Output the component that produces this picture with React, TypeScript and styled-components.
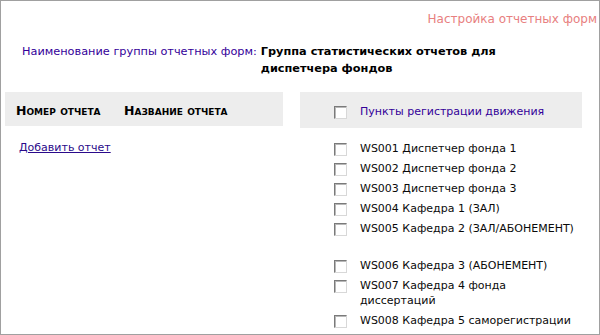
import React from "react";
import styled, { createGlobalStyle } from "styled-components";

const GlobalStyle = createGlobalStyle`
  html, body {
    margin: 0;
    padding: 0;
    background: #ffffff;
  }
  body {
    font-family: "DejaVu Sans", Verdana, sans-serif;
    font-size: 11px;
    color: #111;
  }
`;

const Frame = styled.div`
  box-sizing: border-box;
  width: 600px;
  height: 335px;
  border: 1px solid #a0a0a0;
  overflow: hidden;
`;

const PageTitle = styled.div`
  text-align: right;
  color: #e88080;
  font-size: 12px;
  padding: 11px 2px 0 0;
  line-height: 15px;
`;

const GroupRow = styled.div`
  display: flex;
  gap: 4px;
  padding: 16px 0 0 21px;
  line-height: 17px;
  font-size: 11.3px;
`;

const GroupLabel = styled.span`
  color: #330099;
  white-space: nowrap;
`;

const GroupValue = styled.span`
  font-weight: bold;
  color: #000;
  width: 250px;
`;

const Columns = styled.div`
  display: flex;
  padding: 15px 0 0 4px;
  gap: 17px;
`;

const Panel = styled.div<{ $width: number }>`
  width: ${(p) => p.$width}px;
`;

const HeadBar = styled.div<{ $height: number; $indent: number }>`
  display: flex;
  align-items: center;
  background: #ededed;
  height: ${(p) => p.$height}px;
  padding-left: ${(p) => p.$indent}px;
`;

const HeadCell = styled.div<{ $width?: number }>`
  width: ${(p) => (p.$width ? `${p.$width}px` : "auto")};
  font-weight: bold;
  font-variant: small-caps;
  font-size: 12.5px;
  color: #000;
  padding-top: 2px;
`;

const AddLink = styled.a`
  display: inline-block;
  margin: 14px 0 0 14px;
  color: #2a0a8a;
  text-decoration: underline;
  line-height: 15px;
`;

const Box = styled.span`
  box-sizing: border-box;
  flex: none;
  width: 13px;
  height: 13px;
  background: #fff;
  border-top: 1px solid #7a7a7a;
  border-left: 1px solid #7a7a7a;
  border-right: 1px solid #d8d8d8;
  border-bottom: 1px solid #d8d8d8;
  box-shadow: inset 1px 1px 0 #b8b8b8;
  margin-top: 2px;
`;

const CheckRow = styled.div<{ $gapBefore?: number }>`
  display: flex;
  align-items: flex-start;
  gap: 13px;
  padding: 2px 0 3px 34px;
  margin-top: ${(p) => p.$gapBefore ?? 0}px;
  line-height: 15px;
`;

const HeadCheck = styled.div`
  display: flex;
  align-items: flex-start;
  gap: 13px;
  line-height: 15px;
  padding-top: 2px;
`;

const HeadLabel = styled.span`
  color: #330099;
`;

const ItemLabel = styled.span`
  color: #0a0a0a;
`;

const List = styled.div`
  padding-top: 11px;
`;

const items: { text: React.ReactNode; gap?: number }[] = [
  { text: "WS001 Диспетчер фонда 1" },
  { text: "WS002 Диспетчер фонда 2" },
  { text: "WS003 Диспетчер фонда 3" },
  { text: "WS004 Кафедра 1 (ЗАЛ)" },
  { text: "WS005 Кафедра 2 (ЗАЛ/АБОНЕМЕНТ)" },
  { text: "WS006 Кафедра 3 (АБОНЕМЕНТ)", gap: 17 },
  {
    text: (
      <>
        WS007 Кафедра 4 фонда
        <br />
        диссертаций
      </>
    ),
  },
  { text: "WS008 Кафедра 5 саморегистрации" },
];

export default function App() {
  return (
    <>
      <GlobalStyle />
      <Frame>
        <PageTitle>Настройка отчетных форм</PageTitle>
        <GroupRow>
          <GroupLabel>Наименование группы отчетных форм:</GroupLabel>
          <GroupValue>Группа статистических отчетов для диспетчера фондов</GroupValue>
        </GroupRow>
        <Columns>
          <Panel $width={278}>
            <HeadBar $height={34} $indent={11}>
              <HeadCell $width={108}>Номер отчета</HeadCell>
              <HeadCell>Название отчета</HeadCell>
            </HeadBar>
            <AddLink href="#">Добавить отчет</AddLink>
          </Panel>
          <Panel $width={282}>
            <HeadBar $height={36} $indent={34}>
              <HeadCheck>
                <Box />
                <HeadLabel>Пункты регистрации движения</HeadLabel>
              </HeadCheck>
            </HeadBar>
            <List>
              {items.map((it, i) => (
                <CheckRow key={i} $gapBefore={it.gap}>
                  <Box />
                  <ItemLabel>{it.text}</ItemLabel>
                </CheckRow>
              ))}
            </List>
          </Panel>
        </Columns>
      </Frame>
    </>
  );
}
